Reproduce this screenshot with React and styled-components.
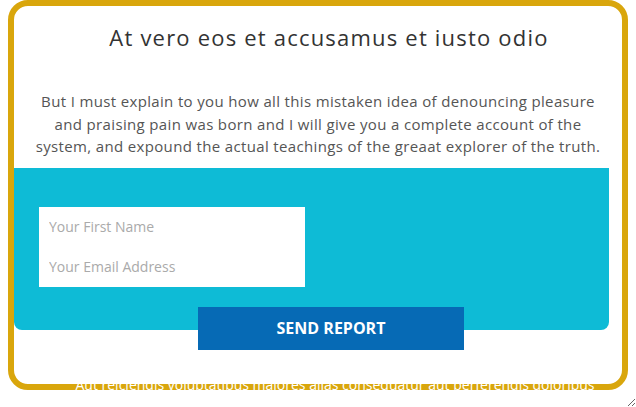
import styled, { createGlobalStyle } from "styled-components";

const GlobalStyle = createGlobalStyle`
  html, body {
    margin: 0;
    padding: 0;
    background: #ffffff;
  }
  body {
    font-family: "Open Sans", Lato, Arial, sans-serif;
  }
`;

const Frame = styled.div`
  box-sizing: border-box;
  width: 100vw;
  height: 100vh;
  padding: 0 8px;
  overflow: hidden;
  resize: both;
`;

const Card = styled.div`
  box-sizing: border-box;
  height: 390px;
  border: 6px solid #d9a60c;
  border-radius: 20px;
`;

const Title = styled.h1`
  margin: 0 0 0 22px;
  padding-top: 15px;
  text-align: center;
  font-size: 22px;
  line-height: 32px;
  font-weight: 500;
  color: #333333;
  letter-spacing: 1.2px;
`;

const Lead = styled.p`
  margin: 37px auto 0;
  width: 574px;
  text-align: center;
  font-size: 15px;
  line-height: 22.5px;
  font-weight: 400;
  color: #555555;
  letter-spacing: 0.35px;
`;

const Panel = styled.form`
  margin: 10px 13px 0 0;
  height: 162px;
  box-sizing: border-box;
  padding: 39px 0 0 25px;
  background: #0ebbd6;
  border-radius: 0 0 8px 8px;
  display: flex;
  flex-direction: column;
  align-items: flex-start;
`;

const Fields = styled.div`
  width: 266px;
  background: #ffffff;
  display: flex;
  flex-direction: column;
`;

const Field = styled.input`
  height: 40px;
  border: none;
  outline: none;
  padding: 0 10px;
  background: transparent;
  font-family: inherit;
  font-size: 14px;
  color: #333;

  &::placeholder {
    color: #aaaaaa;
  }
`;

const SendButton = styled.button`
  flex: none;
  margin: 20px 0 -20px 159px;
  width: 266px;
  height: 43px;
  border: none;
  background: #066ab5;
  color: #ffffff;
  font-family: inherit;
  font-size: 16px;
  font-weight: 700;
  cursor: pointer;
`;

const Footnote = styled.p`
  margin: 46px 0 0 34px;
  text-align: center;
  font-size: 14px;
  line-height: 18px;
  color: #ffffff;
  white-space: nowrap;
`;

export default function App() {
  return (
    <>
      <GlobalStyle />
      <Frame>
        <Card>
          <Title>At vero eos et accusamus et iusto odio</Title>
          <Lead>
            But I must explain to you how all this mistaken idea of denouncing
            pleasure and praising pain was born and I will give you a complete
            account of the system, and expound the actual teachings of the
            greaat explorer of the truth.
          </Lead>
          <Panel onSubmit={(e) => e.preventDefault()}>
            <Fields>
              <Field type="text" placeholder="Your First Name" />
              <Field type="email" placeholder="Your Email Address" />
            </Fields>
            <SendButton type="submit">SEND REPORT</SendButton>
          </Panel>
          <Footnote>
            Aut reiciendis voluptatibus maiores alias consequatur aut
            perferendis doloribus
          </Footnote>
        </Card>
      </Frame>
    </>
  );
}
